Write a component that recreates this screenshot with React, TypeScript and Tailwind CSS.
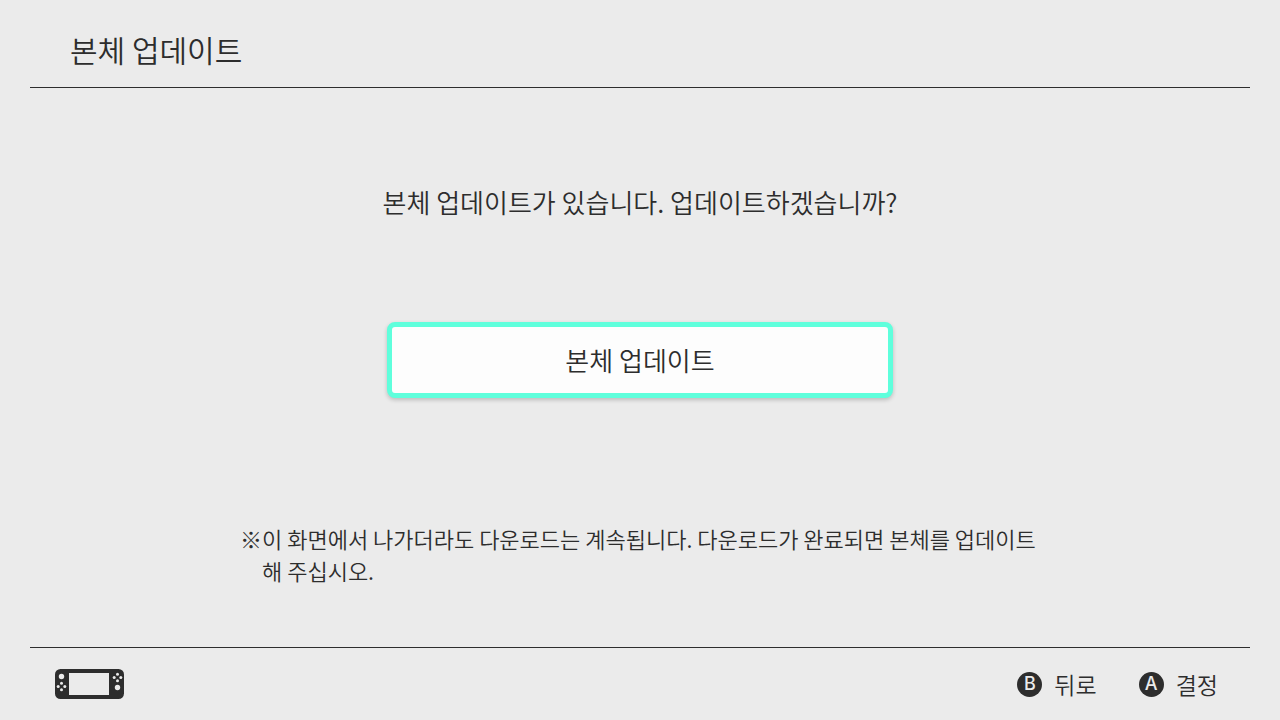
import type { ReactNode } from "react";

function ConsoleIcon() {
  return (
    <svg width="70" height="30" viewBox="0 0 70 30" role="img" aria-label="본체">
      <rect x="0" y="0" width="69" height="30" rx="5.5" fill="#2d2d2d" />
      <rect x="14" y="4" width="40" height="22" fill="#ebebeb" />
      <g fill="#ebebeb">
        <circle cx="6.5" cy="7.5" r="2.7" />
        <circle cx="6.5" cy="14.2" r="1.5" />
        <circle cx="6.5" cy="20.8" r="1.5" />
        <circle cx="3.2" cy="17.5" r="1.5" />
        <circle cx="9.8" cy="17.5" r="1.5" />
        <circle cx="62.5" cy="5.2" r="1.5" />
        <circle cx="62.5" cy="11.8" r="1.5" />
        <circle cx="59.2" cy="8.5" r="1.5" />
        <circle cx="65.8" cy="8.5" r="1.5" />
        <circle cx="62.5" cy="18.5" r="2.7" />
      </g>
    </svg>
  );
}

function Hint({ letter, children }: { letter: string; children: ReactNode }) {
  return (
    <button type="button" className="flex items-center gap-3">
      <span className="flex size-[25px] items-center justify-center rounded-full bg-[#2d2d2d] font-[Inter,sans-serif] text-[18px] leading-none font-medium text-[#ebebeb]">
        {letter}
      </span>
      <span className="text-[23px] leading-8">{children}</span>
    </button>
  );
}

export default function App() {
  return (
    <div className="flex min-h-screen flex-col bg-[#ebebeb] px-[30px] font-['Noto_Sans_CJK_KR',sans-serif] font-[350] text-[#2d2d2d]">
      <header className="flex h-[88px] items-center border-b border-[#2d2d2d] px-10 pt-[10px]">
        <h1 className="text-[30px] leading-10 font-[350]">본체 업데이트</h1>
      </header>

      <main className="flex flex-1 flex-col items-center pt-[94px] pb-[61px]">
        <p className="text-center text-[26px] leading-10">본체 업데이트가 있습니다. 업데이트하겠습니까?</p>
        <button
          type="button"
          className="mt-[100px] w-full max-w-[506px] rounded-lg border-5 border-[#5fffdc] bg-[#fdfdfd] py-[13px] text-[26px] leading-10 shadow-[0_2px_4px_rgba(0,0,0,0.2)]"
        >
          본체 업데이트
        </button>
        <div className="mt-auto flex w-full max-w-[800px] text-[22px] leading-8">
          <span>※</span>
          <p>
            이 화면에서 나가더라도 다운로드는 계속됩니다. 다운로드가 완료되면 본체를 업데이트해 주십시오.
          </p>
        </div>
      </main>

      <footer className="flex h-[73px] items-center justify-between border-t border-[#2d2d2d] pr-8 pl-[25px]">
        <ConsoleIcon />
        <div className="flex gap-[42px]">
          <Hint letter="B">뒤로</Hint>
          <Hint letter="A">결정</Hint>
        </div>
      </footer>
    </div>
  );
}
